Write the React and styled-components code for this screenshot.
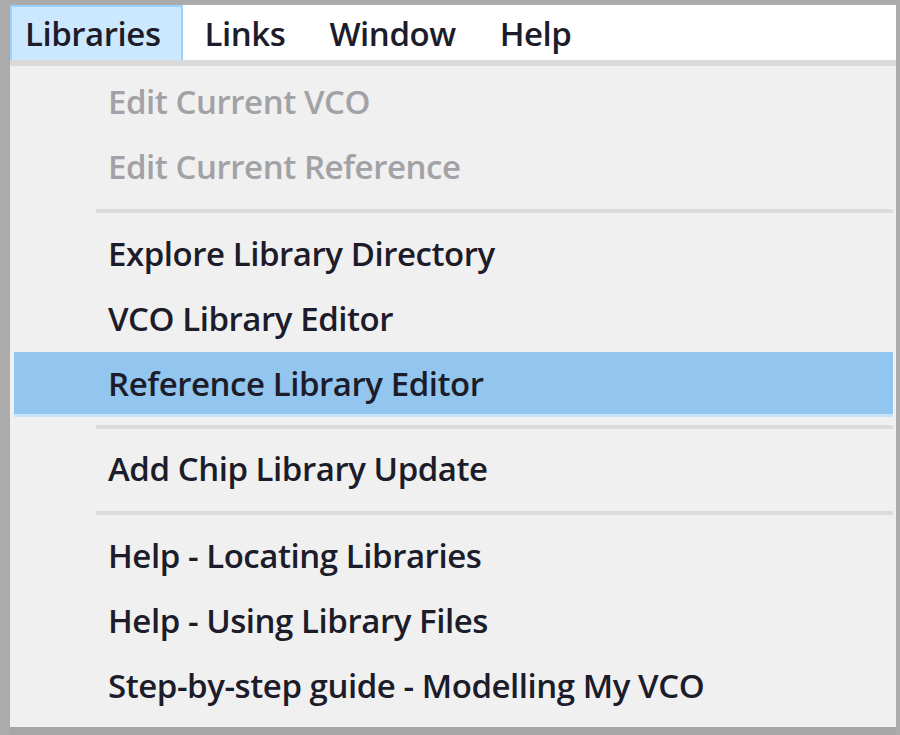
import styled, { createGlobalStyle } from "styled-components";

const menuBarItems = ["Libraries", "Links", "Window", "Help"];

const menuList = [
  { type: "item", label: "Edit Current VCO", disabled: true },
  { type: "item", label: "Edit Current Reference", disabled: true },
  { type: "sep", size: 22 },
  { type: "item", label: "Explore Library Directory" },
  { type: "item", label: "VCO Library Editor" },
  { type: "item", label: "Reference Library Editor", active: true },
  { type: "sep", size: 20 },
  { type: "item", label: "Add Chip Library Update" },
  { type: "sep", size: 22 },
  { type: "item", label: "Help - Locating Libraries" },
  { type: "item", label: "Help - Using Library Files" },
  { type: "item", label: "Step-by-step guide - Modelling My VCO" },
];

const App = () => {
  return (
    <>
      <GlobalStyle />
      <Window>
        <MenuBar>
          {menuBarItems.map((it, idx) => (
            <BarItem key={it} open={idx === 0}>
              {it}
            </BarItem>
          ))}
        </MenuBar>
        <Dropdown>
          {menuList.map((it, idx) =>
            it.type === "sep" ? (
              <Separator key={idx} size={it.size} />
            ) : (
              <MenuItem key={idx} disabled={it.disabled} active={it.active}>
                {it.label}
              </MenuItem>
            )
          )}
        </Dropdown>
        <BottomEdge />
      </Window>
    </>
  );
};

export default App;

const GlobalStyle = createGlobalStyle`
  html, body {
    margin: 0;
    padding: 0;
    background: #ababab;
  }
  body {
    font-family: "Open Sans", "Noto Sans", sans-serif;
  }
`;

const Window = styled.div`
  width: 900px;
  height: 735px;
  box-sizing: border-box;
  padding: 5px 4px 0 10px;
  background: #ababab;
  display: flex;
  flex-direction: column;
  overflow: hidden;
`;

const MenuBar = styled.div`
  height: 55px;
  background: #ffffff;
  display: flex;
  align-items: stretch;
  flex-shrink: 0;
`;

const BarItem = styled.div`
  box-sizing: border-box;
  padding-left: ${(p) => (p.open ? "13px" : "20px")};
  padding-right: 20px;
  display: flex;
  align-items: center;
  font-size: 33px;
  font-weight: 600;
  letter-spacing: -0.45px;
  color: #1c1c2a;
  background: ${(p) => (p.open ? "#cce8ff" : "transparent")};
  border: 2px solid ${(p) => (p.open ? "#99d1ff" : "transparent")};
  border-bottom-width: 0;
`;

const Dropdown = styled.div`
  flex: 1;
  background: #f0f0f0;
  border-top: 6px solid #dadada;
  padding: 4px 3px 0 4px;
  display: flex;
  flex-direction: column;
`;

const MenuItem = styled.div`
  height: 65px;
  flex-shrink: 0;
  box-sizing: border-box;
  padding-left: 94px;
  display: flex;
  align-items: center;
  font-size: 33px;
  font-weight: 600;
  letter-spacing: -0.45px;
  color: ${(p) => (p.disabled ? "#a2a2a6" : "#1c1c2a")};
  background: ${(p) => (p.active ? "#93c6ee" : "transparent")};
  border-bottom: 3px solid ${(p) => (p.active ? "#c8e3f8" : "transparent")};
`;

const Separator = styled.div`
  height: ${(p) => p.size}px;
  flex-shrink: 0;
  display: flex;
  align-items: center;
  padding-left: 82px;

  &::after {
    content: "";
    flex: 1;
    height: 4px;
    background: #dcdcdc;
  }
`;

const BottomEdge = styled.div`
  height: 8px;
  flex-shrink: 0;
  background: #a6a6a6;
`;
